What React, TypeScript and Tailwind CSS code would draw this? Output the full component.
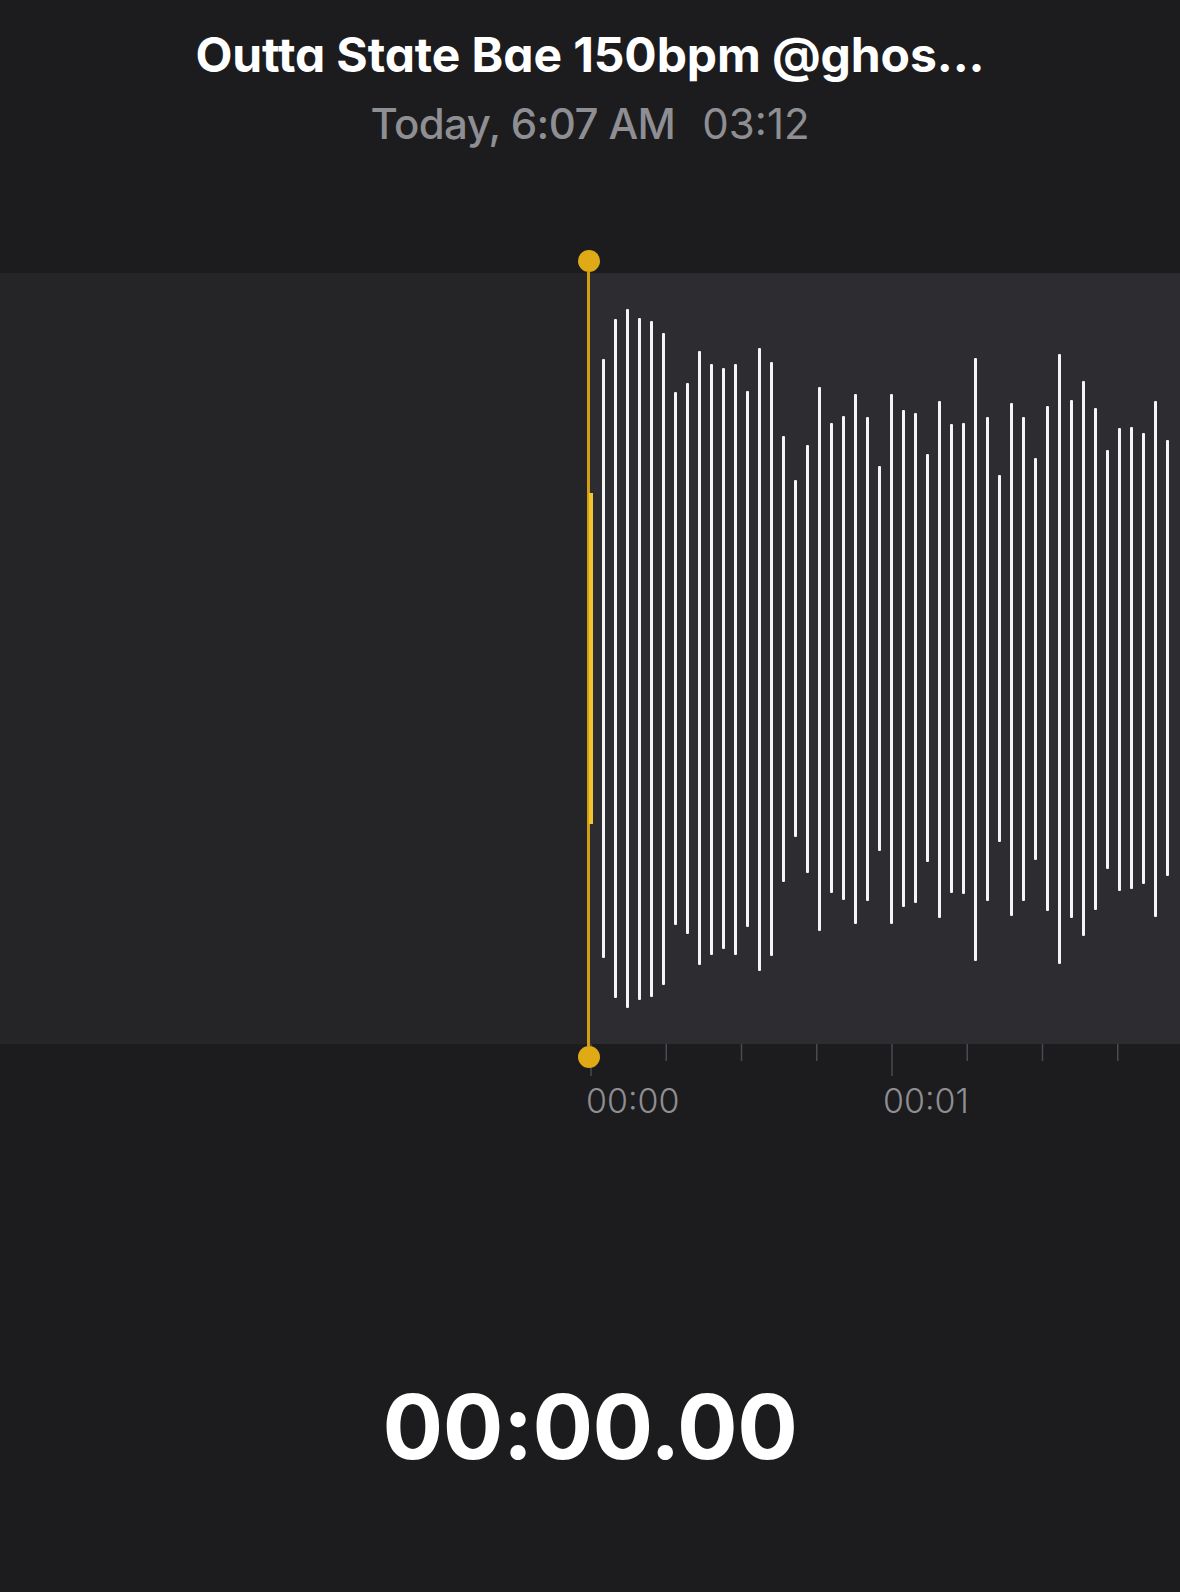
const bars: [number, number][] = [
  [358, 957], [318, 997], [308, 1007], [317, 999], [320, 996], [332, 984],
  [391, 924], [382, 933], [350, 964], [363, 954], [367, 948], [363, 954],
  [390, 926], [347, 970], [361, 955], [435, 881], [479, 836], [444, 872],
  [386, 930], [422, 892], [415, 899], [393, 923], [416, 900], [465, 850],
  [393, 923], [409, 906], [412, 902], [453, 861], [400, 917], [423, 892],
  [422, 893], [357, 960], [416, 900], [474, 841], [402, 915], [416, 900],
  [457, 859], [405, 910], [353, 963], [399, 917], [380, 935], [407, 909],
  [449, 868], [427, 890], [426, 888], [432, 883], [400, 916], [439, 875],
]

const PANEL_TOP = 272
const PANEL_H = 771
const PLAYHEAD_X = 588.5
const TICK_STEP = 75.25

function Waveform() {
  return (
    <svg
      className="absolute left-0 top-0"
      width={1180}
      height={PANEL_H}
      viewBox={`0 0 1180 ${PANEL_H}`}
    >
      {bars.map(([top, bottom], i) => (
        <rect
          key={i}
          x={602 + i * 12}
          y={top - PANEL_TOP}
          width={3}
          height={bottom - top}
          rx={1}
          fill="#f5f5f7"
        />
      ))}
    </svg>
  )
}

function TickRow() {
  const ticks = Array.from({ length: 8 }, (_, k) => k)
  return (
    <svg width={1180} height={40} viewBox="0 0 1180 40" className="block">
      {ticks.map((k) => {
        const x = 591 + k * TICK_STEP
        const long = k % 4 === 0
        return (
          <line
            key={k}
            x1={x}
            x2={x}
            y1={0}
            y2={long ? 32 : 17}
            stroke="#4a4a4f"
            strokeWidth={1.5}
          />
        )
      })}
    </svg>
  )
}

function Playhead() {
  return (
    <div
      className="pointer-events-none absolute top-[-23px] flex h-[818px] w-[22px] flex-col items-center"
      style={{ left: PLAYHEAD_X - 11 }}
    >
      <div className="h-[22px] w-[22px] shrink-0 rounded-full bg-[#dfaa16]" />
      <div className="relative w-[3px] flex-1 bg-[#d29f12]">
        <div className="absolute left-[2px] top-[221px] h-[331px] w-[4px] bg-[#f3c531]" />
      </div>
      <div className="h-[22px] w-[22px] shrink-0 rounded-full bg-[#dfaa16]" />
    </div>
  )
}

export default function App() {
  return (
    <div className="flex min-h-[1592px] w-[1180px] flex-col overflow-hidden bg-[#1c1c1e] font-['Inter','Liberation_Sans',sans-serif]">
      <header className="flex flex-col items-center pt-[31px]">
        <h1 className="text-[48px] font-bold leading-none tracking-[-0.1px] text-white [font-feature-settings:'cv11']">
          Outta State Bae 150bpm @ghos...
        </h1>
        <p className="mt-[24px] flex gap-[27px] text-[42px] leading-none text-[#8e8e93]">
          <span className="font-medium tracking-[-0.6px]">Today, 6:07 AM</span>
          <span className="font-normal">03:12</span>
        </p>
      </header>

      <section className="relative mt-[128px]">
        <div className="relative flex h-[771px]">
          <div className="w-[588px] bg-[#252528]" />
          <div className="flex-1 bg-[#2c2c31]" />
          <Waveform />
        </div>
        <TickRow />
        <div className="flex pl-[586px] text-[34px] font-light leading-none text-[#8e8e93]">
          <span className="w-[300px]">00:00</span>
          <span className="w-[300px]">00:01</span>
        </div>
        <Playhead />
      </section>

      <div className="mt-[264px] flex justify-center">
        <span className="text-[90px] font-bold leading-none tracking-[-0.5px] text-white">
          00:00.00
        </span>
      </div>
    </div>
  )
}
